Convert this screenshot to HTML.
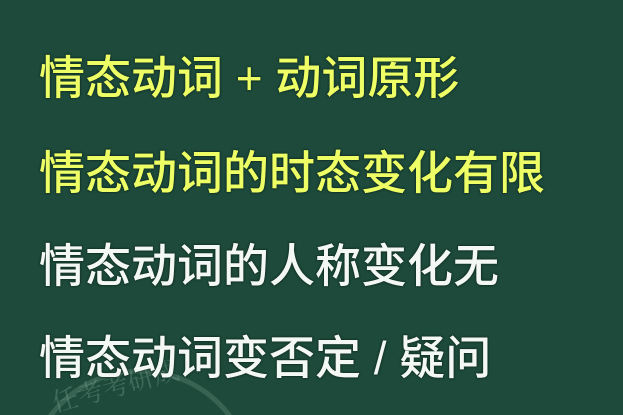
<!DOCTYPE html>
<html><head><meta charset="utf-8"><style>
html,body{margin:0;padding:0;width:623px;height:415px;overflow:hidden;}
body{background:#1d4a3b;position:relative;font-family:"Liberation Sans","Noto Sans CJK SC",sans-serif;}
svg{position:absolute;left:0;top:0;display:block;}
.l{position:absolute;left:39px;font-size:46px;line-height:50px;white-space:nowrap;font-weight:500;text-shadow:0 0 2px #102a20,0 0 2px #102a20;}
.y{color:#eeff66;}
.w{color:#f4f8f4;}
</style></head><body>
<svg width="623" height="415" viewBox="0 0 623 415">
<circle cx="140" cy="483" r="112" fill="none" stroke="rgba(120,160,140,0.3)" stroke-width="5"/>
<text x="55" y="412" font-size="26" fill="rgba(130,170,150,0.35)" font-family="Noto Serif CJK SC, serif" transform="rotate(-15 55 412)">任考考研成</text>
</svg>
<div class="l y" style="top:53px">情态动词 + 动词原形</div>
<div class="l y" style="top:148px">情态动词的时态变化有限</div>
<div class="l w" style="top:241px">情态动词的人称变化无</div>
<div class="l w" style="top:333px">情态动词变否定 / 疑问</div>
</body></html>
